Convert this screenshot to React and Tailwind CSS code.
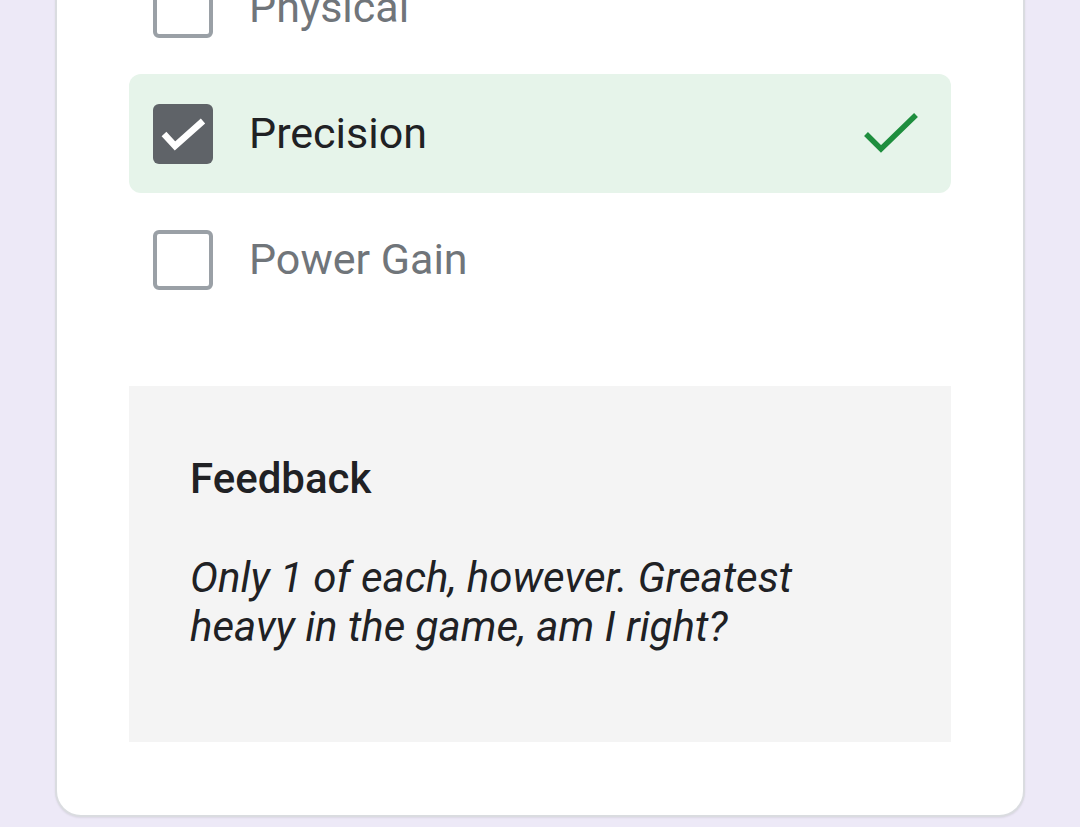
import React from 'react';

const font = { fontFamily: 'Roboto, "Noto Sans", sans-serif' };

const Box = ({ checked }) =>
    checked ? (
        <div className="w-[60px] h-[60px] rounded-[6px] bg-[#5f6368] flex-shrink-0 relative">
            <svg width="60" height="60" viewBox="0 0 60 60" className="absolute inset-0">
                <path d="M11 30 L22 42 L50 17" fill="none" stroke="#fff" strokeWidth="6.5" />
            </svg>
        </div>
    ) : (
        <div className="w-[60px] h-[60px] rounded-[6px] border-[4px] border-[#9aa0a6] flex-shrink-0" />
    );

const Option = ({ label, checked, correct }) => (
    <div
        className={
            'h-[119px] flex items-center pl-[24px] pr-[33px] rounded-[12px] ' +
            (correct ? 'bg-[#e6f4ea]' : '')
        }
    >
        <Box checked={checked} />
        <span
            className={
                'ml-[36px] text-[43px] leading-[49px] flex-1 ' +
                (checked ? 'text-[#202124]' : 'text-[#70757a]')
            }
        >
            {label}
        </span>
        {correct && (
            <svg width="54" height="44" viewBox="0 0 54 44">
                <path d="M2 22 L17 37 L52 3" fill="none" stroke="#1e8e3e" strokeWidth="5.5" />
            </svg>
        )}
    </div>
);

export default function App() {
    return (
        <div className="w-[1080px] h-[827px] overflow-hidden bg-[#ede9f7]" style={font}>
            <div className="ml-[55px] w-[970px] mt-[-109px] bg-white border-[2px] border-t-0 border-[#dadce0] rounded-b-[26px] pl-[72px] pr-[72px] pt-[57px] pb-[73px] shadow-[0_1px_2px_rgba(0,0,0,0.08)]">
                <div className="flex flex-col gap-[7px]">
                    <Option label="Physical" />
                    <Option label="Precision" checked correct />
                    <Option label="Power Gain" />
                </div>
                <div className="mt-[67px] bg-[#f4f4f4] pl-[61px] pr-[40px] pt-[68px] pb-[91px]">
                    <div className="text-[42px] leading-[49px] font-medium text-[#202124]">Feedback</div>
                    <div className="mt-[50px] text-[42px] leading-[49px] italic text-[#202124] w-[640px]">
                        Only 1 of each, however. Greatest heavy in the game, am I right?
                    </div>
                </div>
            </div>
        </div>
    );
}
